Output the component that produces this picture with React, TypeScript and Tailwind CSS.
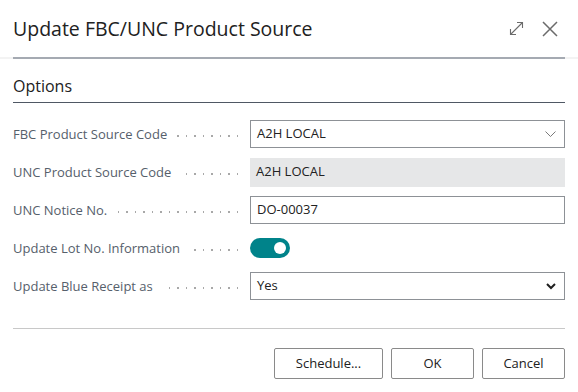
const fields = [
    { label: "FBC Product Source Code", kind: "lookup", value: "A2H LOCAL" },
    { label: "UNC Product Source Code", kind: "readonly", value: "A2H LOCAL" },
    { label: "UNC Notice No.", kind: "text", value: "DO-00037" },
    { label: "Update Lot No. Information", kind: "toggle", value: "" },
    { label: "Update Blue Receipt as", kind: "select", value: "Yes" },
]

const dots = Array.from({ length: 30 }, (_, i) => i)

export default function App() {
    return (
        <div className="w-[578px] h-[392px] bg-white text-[#212121] overflow-hidden" style={{ fontFamily: '"Segoe UI", "Open Sans", "Noto Sans", sans-serif' }}>
            <div className="flex items-center justify-between pl-[13px] pr-[20px] h-[57px]">
                <h1 className="text-[19.5px] leading-none">Update FBC/UNC Product Source</h1>
                <div className="flex items-center gap-[18px] text-[#6b6b6b]">
                    <svg width="15" height="15" viewBox="0 0 15 15" fill="none" stroke="currentColor" strokeWidth="1.1">
                        <path d="M1.5 13.5 L13.5 1.5 M8 1.5 H13.5 V7 M1.5 8 V13.5 H7" />
                    </svg>
                    <svg width="16" height="16" viewBox="0 0 16 16" fill="none" stroke="currentColor" strokeWidth="1.5">
                        <path d="M1 1 L15 15 M15 1 L1 15" />
                    </svg>
                </div>
            </div>
            <div className="h-[2px] bg-[#f3f3f3]">
                <div className="mx-[13px] h-[2px] bg-[#a5aab2]"></div>
            </div>

            <div className="px-[13px]">
                <div className="pt-[17px] pb-[6px] border-b border-[#4f5864]">
                    <h2 className="text-[16px] leading-[20px]">Options</h2>
                </div>

                <div className="flex flex-col gap-[10px] pt-[17px]">
                    {fields.map(f => <FieldRow key={f.label} field={f} />)}
                </div>

                <div className="mt-[28px] border-t border-[#c8c8c8]"></div>

                <div className="flex justify-end gap-[8px] pt-[19px]">
                    <Button label="Schedule..." width="w-[109px]" />
                    <Button label="OK" width="w-[83px]" />
                    <Button label="Cancel" width="w-[83px]" />
                </div>
            </div>
        </div>
    )
}

const FieldRow = (props: any) => {
    const f = props.field
    return (
        <div className="flex h-[28px]">
            <div className="w-[225px] h-[28px] flex gap-[10px] text-[13px] leading-[28px] text-[#56606b]">
                <span className="whitespace-nowrap shrink-0">{f.label}</span>
                <div className="flex-1 min-w-0 h-[2px] mt-[15px] flex flex-row-reverse items-start gap-[7px] overflow-hidden">
                    {dots.map(d => <span key={d} className="block w-[1.5px] h-[1.5px] shrink-0 bg-[#a8a8a8]"></span>)}
                </div>
            </div>
            <div className="ml-[12px] flex-1 flex items-center">
                <FieldValue field={f} />
            </div>
        </div>
    )
}

const FieldValue = (props: any) => {
    const f = props.field
    if (f.kind === "toggle") {
        return (
            <div className="w-[40px] h-[20px] rounded-full bg-[#00838a] flex items-center justify-end pr-[4px]">
                <div className="w-[12px] h-[12px] rounded-full bg-white"></div>
            </div>
        )
    }
    if (f.kind === "readonly") {
        return (
            <div className="w-full h-[29px] bg-[#e6e7e8] flex items-center px-[6px] text-[13px]">{f.value}</div>
        )
    }
    return (
        <div className="w-full h-[28px] border border-[#8d9196] flex items-center justify-between pl-[6px] pr-[8px] text-[13px]">
            <span>{f.value}</span>
            {f.kind === "lookup" && (
                <svg width="11" height="6" viewBox="0 0 11 6" fill="none" stroke="#6b6b6b" strokeWidth="0.9">
                    <path d="M0.5 0.5 L5.5 5.5 L10.5 0.5" />
                </svg>
            )}
            {f.kind === "select" && (
                <svg width="10" height="7" viewBox="0 0 10 7" fill="none" stroke="#1f1f1f" strokeWidth="2">
                    <path d="M1 1 L5 5 L9 1" />
                </svg>
            )}
        </div>
    )
}

const Button = (props: any) => {
    return (
        <button className={`${props.width} h-[31px] border border-[#8a8a8a] rounded-[2px] bg-white text-[13px] text-[#212121]`}>
            {props.label}
        </button>
    )
}
